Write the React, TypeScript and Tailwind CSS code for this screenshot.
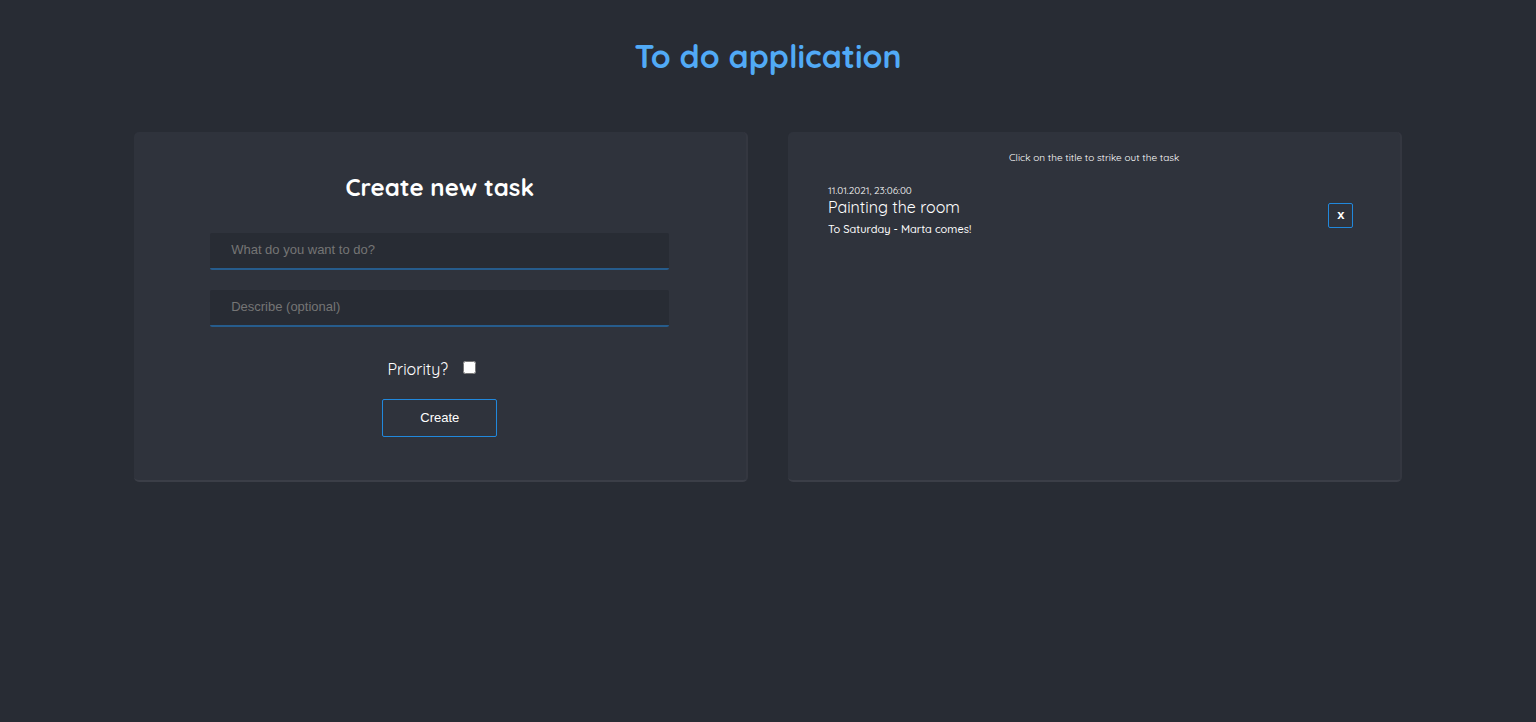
import { useState } from "react";
import type { FormEvent } from "react";

type Task = {
  id: number;
  date: string;
  title: string;
  description: string;
  done: boolean;
  priority: boolean;
};

const initialTasks: Task[] = [
  {
    id: 1,
    date: "11.01.2021, 23:06:00",
    title: "Painting the room",
    description: "To Saturday - Marta comes!",
    done: false,
    priority: false,
  },
];

const panel =
  "min-h-[350px] w-2/5 rounded-[5px] border-r-2 border-b-2 border-r-[#343740] border-b-[#3b3e47] bg-[#2f333c]";
const field =
  "h-[37px] w-3/4 rounded-[2px] border-b-2 border-[#265c8c] bg-[#282c34] px-[21px] pb-0.5 font-['Liberation_Sans',sans-serif] text-[13px] text-white outline-none placeholder:text-[#757575]";

export default function App() {
  const [tasks, setTasks] = useState<Task[]>(initialTasks);
  const [title, setTitle] = useState("");
  const [description, setDescription] = useState("");
  const [priority, setPriority] = useState(false);

  const addTask = (event: FormEvent) => {
    event.preventDefault();
    if (!title.trim()) return;
    const date = new Date().toLocaleString("pl-PL");
    setTasks([...tasks, { id: Date.now(), date, title, description, done: false, priority }]);
    setTitle("");
    setDescription("");
    setPriority(false);
  };

  const toggleTask = (id: number) =>
    setTasks(tasks.map((task) => (task.id === id ? { ...task, done: !task.done } : task)));

  return (
    <div className="min-h-screen bg-[#282c34] font-[Quicksand,Lato,sans-serif] text-white">
      <h1 className="pt-8 text-center text-[32px] leading-[48px] font-bold text-[#51aaf6]">
        To do application
      </h1>
      <main className="mt-[52px] flex justify-center gap-10">
        <section className={panel}>
          <form onSubmit={addTask} className="flex flex-col items-center pt-10">
            <h2 className="text-[24px] leading-[30px] font-bold">Create new task</h2>
            <input
              aria-label="Task title"
              className={`mt-[31px] ${field}`}
              placeholder="What do you want to do?"
              value={title}
              onChange={(event) => setTitle(event.target.value)}
            />
            <input
              aria-label="Task description"
              className={`mt-5 ${field}`}
              placeholder="Describe (optional)"
              value={description}
              onChange={(event) => setDescription(event.target.value)}
            />
            <div className="mt-[30px] mr-4 flex items-start gap-[15px]">
              <label htmlFor="priority" className="text-[16px] leading-6">
                Priority?
              </label>
              <input
                id="priority"
                type="checkbox"
                className="mt-1 size-[13px]"
                checked={priority}
                onChange={(event) => setPriority(event.target.checked)}
              />
            </div>
            <button
              type="submit"
              className="mt-[18px] h-[38px] w-[115px] rounded-[2px] border border-[#2188dc] font-['Liberation_Sans',sans-serif] text-[13px]"
            >
              Create
            </button>
          </form>
        </section>
        <section className={panel}>
          <p className="pt-[18px] text-center text-[10px] leading-4">
            Click on the title to strike out the task
          </p>
          <ul className="mt-[17px] flex flex-col gap-4 pr-[47px] pl-10">
            {tasks.map((task) => (
              <li key={task.id} className="flex items-center justify-between">
                <div className="pb-2">
                  <p className="text-[10px] leading-4">{task.date}</p>
                  <h3
                    className={`cursor-pointer text-[16px] leading-4 ${task.done ? "line-through" : ""} ${task.priority ? "text-[#51aaf6]" : ""}`}
                    onClick={() => toggleTask(task.id)}
                  >
                    {task.title}
                  </h3>
                  <p className="mt-1 text-[11px] leading-5 font-medium">{task.description}</p>
                </div>
                <button
                  type="button"
                  aria-label={`Remove ${task.title}`}
                  className="flex size-[25px] items-center justify-center rounded-[2px] border border-[#2188dc] font-['Liberation_Sans',sans-serif] text-[13px] leading-4 font-bold"
                  onClick={() => setTasks(tasks.filter((item) => item.id !== task.id))}
                >
                  x
                </button>
              </li>
            ))}
          </ul>
        </section>
      </main>
    </div>
  );
}
